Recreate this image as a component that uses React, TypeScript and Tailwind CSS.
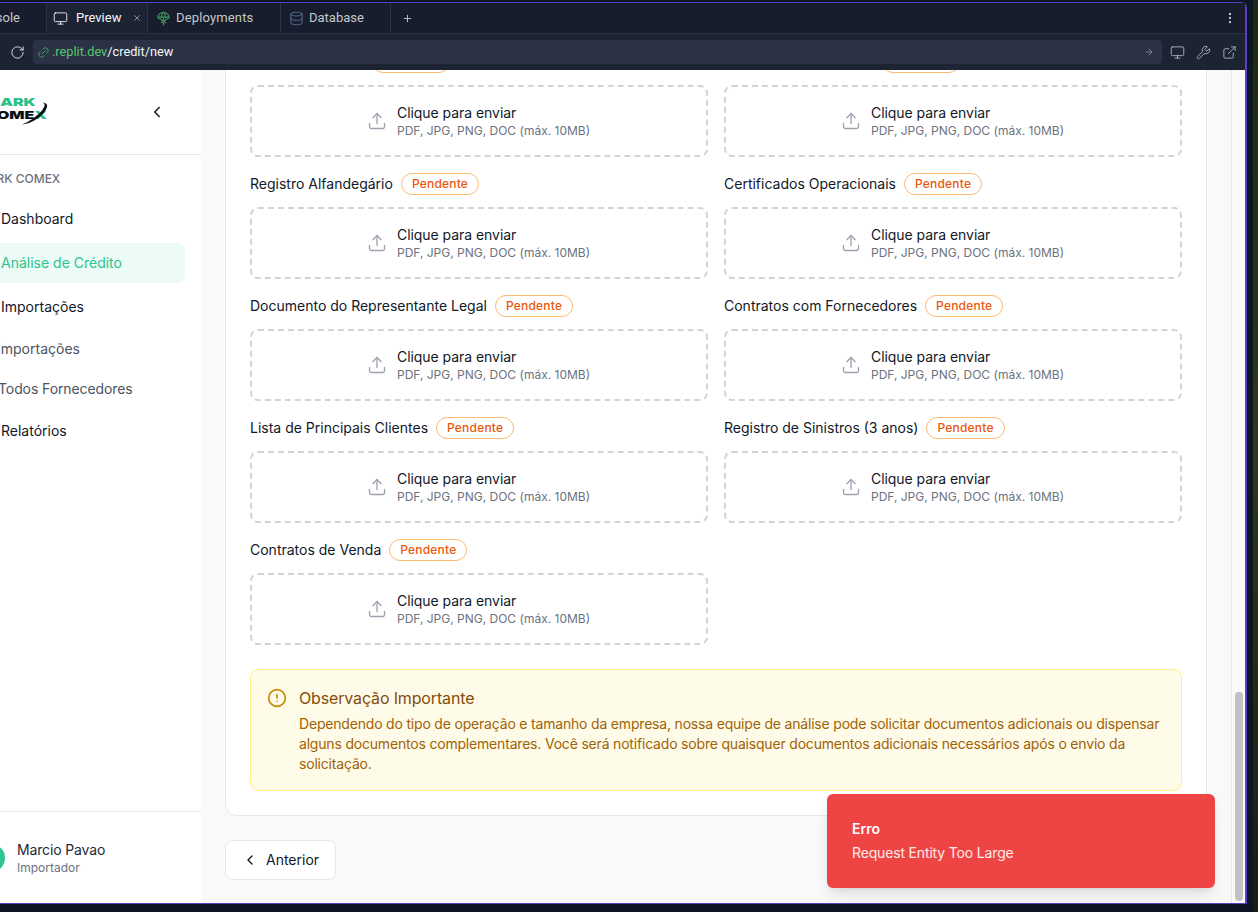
import { ChevronLeft, CircleAlert, Database, ExternalLink, Link2, Monitor, MoreVertical, Plus, RotateCw, Upload, Wrench, X, ArrowRight } from 'lucide-react';

type Field = { label: string; labelClass?: string };

const fields: (Field | null)[] = [
  { label: 'Contrato Social', labelClass: 'w-[114px]' },
  { label: 'Balanço Patrimonial', labelClass: 'w-[150px]' },
  { label: 'Registro Alfandegário' },
  { label: 'Certificados Operacionais' },
  { label: 'Documento do Representante Legal' },
  { label: 'Contratos com Fornecedores' },
  { label: 'Lista de Principais Clientes' },
  { label: 'Registro de Sinistros (3 anos)' },
  { label: 'Contratos de Venda' },
  null,
];

const UploadField = ({ label, labelClass }: Field) => (
  <div className="flex flex-col gap-3">
    <div className="flex h-[22px] items-center gap-2">
      <span className={`text-sm text-[#111827] ${labelClass ?? ''}`}>{label}</span>
      <span className="rounded-full border border-[#fdba74] bg-white px-2.5 py-[3px] text-xs leading-[14px] font-medium tracking-[0.2px] text-[#ea580c]">
        Pendente
      </span>
    </div>
    <div className="flex h-[72px] items-center justify-center gap-2.5 rounded-lg border-2 border-dashed border-[#d1d5db] pr-[1px]">
      <Upload className="h-5 w-5 text-[#9ca3af]" strokeWidth={1.6} />
      <div className="flex flex-col">
        <span className="text-sm leading-5 tracking-[-0.05px] text-[#111827]">Clique para enviar</span>
        <span className="text-xs leading-4 text-[#6b7280]">PDF, JPG, PNG, DOC (máx. 10MB)</span>
      </div>
    </div>
  </div>
);

const DeployIcon = () => (
  <svg viewBox="0 0 16 16" className="h-[15px] w-[15px] text-[#3f8f55]" fill="none" stroke="currentColor" strokeWidth="1.3">
    <path d="M2 7a6 5.500 0 0 1 12 0c-1.200-1-2.600-1-4 0-1.400-1-2.600-1-4 0-1.400-1-2.800-1-4 0Z" />
    <path d="M6 7c0-3 1-5 2-5.500M10 7c0-3-1-5-2-5.500M2 7l6 4 6-4M8 7v8.500M5.500 13 8 10.500 10.500 13" />
  </svg>
);

const Tab = ({ children, active, w }: { children: React.ReactNode; active?: boolean; w: string }) => (
  <div className={`flex h-full items-center gap-2 border-r border-[#2b3245] ${w} ${active ? 'bg-[#1c2333] text-[#f5f9fc]' : 'text-[#c2c8cc]'}`}>
    {children}
  </div>
);

export default function App() {
  return (
    <div className="flex h-[912px] w-[1258px] overflow-hidden bg-[#1f2a14] font-['Inter',sans-serif]">
      <div className="h-full w-[1253px] bg-[#0e1525] pt-[2px] pb-[8px]">
        <div className="flex h-full w-[1247px] flex-col rounded-tr-md border-t border-r-2 border-b border-[#5b3fc4]">
          {/* replit tab bar */}
          <div className="flex h-[31px] shrink-0 items-center border-b border-[#2b3245] bg-[#171d2d] font-['Roboto',sans-serif] text-[13px]">
            <div className="flex h-full w-[47px] items-center justify-end overflow-hidden border-r border-[#2b3245] pr-[26px] text-[#c2c8cc]">
              <span>sole</span>
            </div>
            <Tab active w="w-[101px] pl-[6px] pr-[5px]">
              <Monitor className="h-[15px] w-[15px] shrink-0" strokeWidth={1.4} />
              <span className="flex-1">Preview</span>
              <X className="h-[10px] w-[10px] shrink-0 text-[#9da2a6]" />
            </Tab>
            <Tab w="w-[133px] pl-2">
              <DeployIcon />
              <span className="-ml-[3px] tracking-[0.15px]">Deployments</span>
            </Tab>
            <Tab w="w-[110px] pl-2">
              <Database className="h-[15px] w-[15px] text-[#5f7ea8]" strokeWidth={1.3} />
              <span className="-ml-[3px]">Database</span>
            </Tab>
            <Plus className="ml-[11px] h-[11px] w-[11px] text-[#c2c8cc]" />
            <MoreVertical className="mr-[8px] ml-auto h-[14px] w-[14px] text-[#c2c8cc]" />
          </div>
          {/* url bar */}
          <div className="flex h-[36px] shrink-0 items-center bg-[#1c2333] pr-[8px] pl-[10px]">
            <RotateCw className="h-[15px] w-[15px] text-[#e4e6e8]" strokeWidth={1.5} />
            <div className="ml-[8px] flex h-[24px] flex-1 items-center rounded-[4px] bg-[#2b3245] pr-[8px] pl-[4px] font-['Roboto',sans-serif] text-[12.75px]">
              <Link2 className="h-[13px] w-[13px] -rotate-45 text-[#46b463]" strokeWidth={1.5} />
              <span className="ml-[2px] text-[#57c76f]">.replit.dev</span>
              <span className="text-[#f5f9fc]">/credit/new</span>
              <ArrowRight className="ml-auto h-[10px] w-[10px] text-[#8a8f98]" />
            </div>
            <Monitor className="ml-[8px] h-[15px] w-[15px] text-[#b6bcc2]" strokeWidth={1.4} />
            <Wrench className="ml-[11px] h-[15px] w-[15px] text-[#b6bcc2]" strokeWidth={1.4} />
            <ExternalLink className="ml-[11px] h-[15px] w-[15px] text-[#b6bcc2]" strokeWidth={1.4} />
          </div>

          {/* app preview */}
          <div className="relative flex min-h-0 flex-1 overflow-hidden bg-[#f8f9fb]">
            <aside className="flex w-[201px] shrink-0 flex-col overflow-hidden bg-white">
              <div className="flex h-[85px] shrink-0 items-center justify-between border-b border-[#e5e7eb] pr-[35px]">
                <div className="relative -mt-[7px] -ml-[15px] w-[60px]">
                  <div className="flex origin-left scale-x-[1.45] flex-col text-[11px] leading-[13px] font-black">
                    <span className="text-[#2bbf88]">MARK</span>
                    <span className="text-[#0b0f14]">
                      COME<span className="text-[#2bbf88]">X</span>
                    </span>
                  </div>
                  <svg viewBox="0 0 30 30" className="absolute top-0 left-[36px] h-[32px] w-[29px]" fill="none">
                    <path d="M1 28C12 27 26 17 27 9c.3-2.500-2-3.500-5-3.500 2.500.7 3 2 2 4C21 16 11 24 1 28Z" fill="#0b0f14" />
                  </svg>
                </div>
                <ChevronLeft className="h-[18px] w-[18px] text-[#111827]" />
              </div>
              <div className="flex flex-1 flex-col overflow-hidden pr-[16px]">
                <div className="-ml-[23px] mt-[16px] text-xs leading-4 font-medium whitespace-nowrap text-[#6b7280]">MARK COMEX</div>
                <nav className="mt-[12px] flex flex-col gap-1 text-sm text-[#111827]">
                  <div className="flex h-10 items-center pl-[1px]">Dashboard</div>
                  <div className="flex h-10 items-center rounded-r-lg bg-[#ecfbf5] pl-[1px] text-[#2dc48d]">Análise de Crédito</div>
                  <div className="flex h-10 items-center pl-[1px]">Importações</div>
                  <div className="-mt-[2px] -ml-[3px] flex h-10 items-center text-[#4b5563]">Importações</div>
                  <div className="-mt-1 -ml-[2px] flex h-10 items-center tracking-[-0.1px] text-[#4b5563]">Todos Fornecedores</div>
                  <div className="-mt-[2px] flex h-10 items-center pl-[1px]">Relatórios</div>
                </nav>
              </div>
              <div className="flex h-[92px] shrink-0 items-center gap-3 border-t border-[#e5e7eb]">
                <div className="-ml-[23px] h-[28px] w-[28px] shrink-0 rounded-full bg-[#2dc48d]" />
                <div className="flex flex-col">
                  <span className="text-sm leading-5 tracking-[-0.15px] text-[#1f2937]">Marcio Pavao</span>
                  <span className="text-xs leading-4 text-[#6b7280]">Importador</span>
                </div>
              </div>
            </aside>

            <main className="min-w-0 flex-1 overflow-hidden px-[24px]">
              <div className="-mt-[20px] rounded-xl border border-[#e5e7eb] bg-white px-[24px] pb-[24px]">
                <div className="grid grid-cols-2 gap-4">
                  {fields.map((f, i) => (f ? <UploadField key={f.label} {...f} /> : <div key={i} />))}
                </div>
                <div className="mt-6 flex gap-3 rounded-lg border border-[#fef08a] bg-[#fefce8] p-4">
                  <CircleAlert className="mt-[2px] h-5 w-5 shrink-0 text-[#ca8a04]" />
                  <div>
                    <div className="text-base leading-6 tracking-[-0.15px] text-[#854d0e]">Observação Importante</div>
                    <p className="mt-1 text-sm leading-5 tracking-[-0.19px] text-[#a16207]">
                      Dependendo do tipo de operação e tamanho da empresa, nossa equipe de análise pode solicitar documentos adicionais ou dispensar alguns documentos complementares. Você será notificado sobre quaisquer documentos adicionais necessários após o envio da solicitação.
                    </p>
                  </div>
                </div>
              </div>
              <button className="mt-6 flex h-10 items-center gap-2 rounded-lg border border-[#e5e7eb] bg-white px-4 text-sm text-[#111827]">
                <ChevronLeft className="h-4 w-4" />
                Anterior
              </button>
            </main>

            {/* scrollbar */}
            <div className="flex w-[14px] shrink-0 flex-col justify-end border-l border-[#e8e8e8] bg-[#fafafa] pr-[2px] pb-[2px] pl-[3px]">
              <div className="h-[209px] rounded-full bg-[#c1c1c1]" />
            </div>

            <div className="absolute top-[724px] left-[827px] h-[94px] w-[388px] rounded-md bg-[#ef4444] p-[25px] shadow-lg">
              <div className="text-sm leading-5 font-semibold text-white">Erro</div>
              <div className="mt-1 text-sm leading-5 tracking-[-0.16px] text-white/90">Request Entity Too Large</div>
            </div>
          </div>
        </div>
      </div>
      <div className="flex-1 bg-[linear-gradient(180deg,#1b2a12,#2a3a1a_50%,#14200e)]" />
    </div>
  );
}
